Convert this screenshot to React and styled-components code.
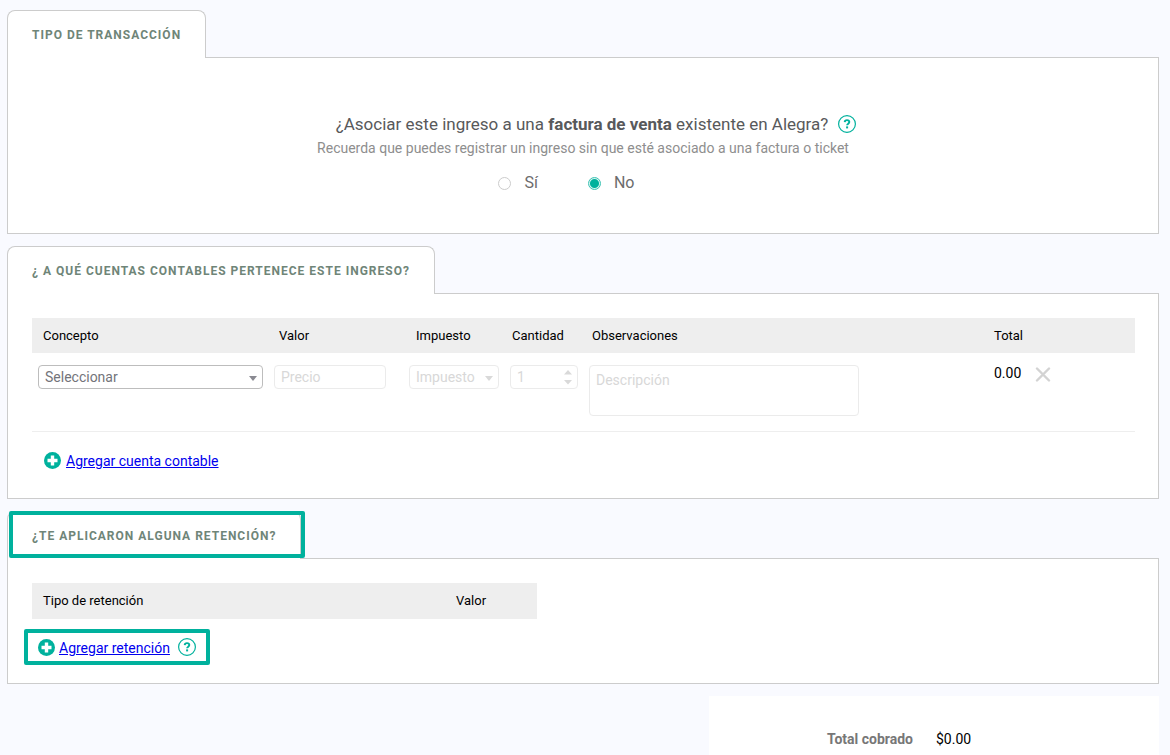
import React from 'react';
import styled, { createGlobalStyle } from 'styled-components';

const GlobalStyle = createGlobalStyle`
  *, *::before, *::after { box-sizing: border-box; }
  body {
    margin: 0;
    background: #f9faff;
    color: #000;
    font-family: Roboto, "Liberation Sans", sans-serif;
    font-size: 14px;
    line-height: 20px;
  }
  input, select, textarea, button { font: inherit; margin: 0; }
`;

const TEAL = '#00b19d';

const Page = styled.main`
  padding: 10px 11px 0 7px;
  height: 100vh;
  overflow: hidden;
`;

const Section = styled.section`
  margin-bottom: 12px;
`;

const Tab = styled.h2`
  position: relative;
  z-index: 1;
  width: fit-content;
  height: 48px;
  margin: 0 0 -1px;
  padding: 14px 24px 0;
  border: 1px solid #ccc;
  border-bottom: 0;
  border-radius: 8px 8px 0 0;
  background: #fff;
  color: #6f8578;
  font-size: 12px;
  font-weight: 700;
  line-height: 20px;
  letter-spacing: 1px;
`;

const TabHighlight = styled.span`
  position: absolute;
  inset: -1px -5px 1px 1px;
  border: 4px solid ${TEAL};
  border-radius: 2px;
`;

const Panel = styled.div`
  padding: ${(p) => p.$padding || '24px 23px 24px 24px'};
  border: 1px solid #ccc;
  background: #fff;
`;

const Question = styled.fieldset`
  margin: 0;
  padding: 0;
  border: 0;
  text-align: center;
`;

const Legend = styled.legend`
  display: flex;
  align-items: center;
  gap: 10px;
  margin: 0 auto;
  padding: 0 0 0 26px;
  color: #58595b;
  font-size: 17px;
  line-height: 24px;
`;

const Hint = styled.p`
  margin: 2px 0 15px;
  color: #8e8e8e;
  line-height: 20px;
`;

const Options = styled.div`
  display: flex;
  justify-content: center;
  gap: 50px;
  padding-right: 33px;
`;

const Option = styled.label`
  display: flex;
  align-items: center;
  gap: 13px;
  color: #6c6c6c;
  font-size: 16px;
  line-height: 20px;
`;

const Radio = styled.input`
  appearance: none;
  width: 13px;
  height: 13px;
  border: 1px solid #ccc;
  border-radius: 50%;
  background: #fff;
  &:checked {
    border-color: #3cc3b4;
    background: radial-gradient(circle, ${TEAL} 4px, #d4f3ef 5px);
  }
`;

const Table = styled.table`
  width: ${(p) => p.$width || '100%'};
  border-collapse: collapse;
  table-layout: fixed;
`;

const Col = styled.col`
  width: ${(p) => p.$width};
`;

const Th = styled.th`
  height: ${(p) => p.$height || '35px'};
  padding: 0 0 0 11px;
  background: #eee;
  font-size: 13px;
  font-weight: 400;
  text-align: left;
`;

const Td = styled.td`
  padding: 12px 0 15px ${(p) => p.$inset || '6px'};
  border-bottom: 1px solid #eee;
  vertical-align: top;
`;

const Control = styled.div`
  position: relative;
  width: ${(p) => p.$width};
  height: ${(p) => p.$height || '24px'};
  color: ${(p) => (p.$active ? '#73747a' : '#d8d8d8')};

  select, input, textarea {
    display: block;
    width: 100%;
    height: 100%;
    padding: 0 6px;
    appearance: none;
    border: 1px solid ${(p) => (p.$active ? '#bdbdbd' : '#ebebeb')};
    border-radius: 4px;
    outline: 0;
    background: #fff;
    color: inherit;
    opacity: 1;
    resize: none;
  }
  textarea { padding: 4px 6px; }
  ::placeholder { color: inherit; opacity: 1; }
  svg {
    position: absolute;
    right: 6px;
    top: 0;
    pointer-events: none;
  }
`;

const TotalCell = styled.div`
  display: flex;
  align-items: center;
  gap: 14px;
  line-height: 17px;
`;

const IconButton = styled.button`
  display: flex;
  padding: 0;
  border: 0;
  background: none;
  cursor: pointer;
`;

const AddRow = styled.div`
  display: flex;
  align-items: center;
  gap: 5px;
  margin: 16px 0 2px 12px;
  line-height: 22px;
`;

const HighlightedRow = styled(AddRow)`
  gap: 4px;
  width: fit-content;
  height: 36px;
  margin: 10px 0 0 -8px;
  padding: 0 10px;
  border: 4px solid ${TEAL};
  border-radius: 2px;
`;

const Link = styled.a`
  color: #00e;
  text-decoration: underline;
  padding-top: 2px;
`;

const HelpSlot = styled.span`
  display: flex;
  margin-left: 4px;
`;

const Totals = styled.dl`
  display: grid;
  grid-template-columns: 204px 1fr;
  column-gap: 23px;
  width: 450px;
  min-height: 120px;
  margin: 0 0 0 auto;
  padding-top: 33px;
  background: #fff;
`;

const TotalLabel = styled.dt`
  color: #777;
  font-weight: 700;
  text-align: right;
`;

const TotalValue = styled.dd`
  margin: 0;
`;

const HelpIcon = () => (
  <svg width="18" height="18" viewBox="0 0 18 18" fill="none" stroke={TEAL} aria-hidden="true">
    <circle cx="9" cy="9" r="8.4" strokeWidth="1.2" />
    <path d="M6.7 7.1C6.8 5.8 7.8 5.100 9 5.100s2.300.7 2.300 2c0 1.500-2.200 1.600-2.200 3.200" strokeWidth="1.900" />
    <path d="M9.100 11.400v2" strokeWidth="2" />
  </svg>
);

const PlusIcon = () => (
  <svg width="17" height="17" viewBox="0 0 17 17" aria-hidden="true">
    <circle cx="8.5" cy="8.5" r="8.5" fill={TEAL} />
    <path d="M8.5 3.500v10M3.500 8.500h10" stroke="#fff" strokeWidth="3.400" />
  </svg>
);

const CloseIcon = () => (
  <svg width="16" height="16" viewBox="0 0 16 16" fill="none" stroke="#d3d3d3" strokeWidth="2.4" strokeLinecap="round" aria-hidden="true">
    <path d="M2 2.500l12 12M14 2.500L2 14.500" />
  </svg>
);

const Caret = ({ fill = '#d9d9d9' }) => (
  <svg width="8" height="24" viewBox="0 0 8 24" fill={fill} aria-hidden="true">
    <path d="M0 11h8l-4 5z" />
  </svg>
);

const Spinner = () => (
  <svg width="8" height="24" viewBox="0 0 8 24" fill="#d9d9d9" aria-hidden="true">
    <path d="M0 9.500h8L4 5zM0 15h8L4 19.500z" />
  </svg>
);

export default function App() {
  return (
    <>
      <GlobalStyle />
      <Page>
        <Section>
          <Tab>TIPO DE TRANSACCIÓN</Tab>
          <Panel $padding="54px 0 40px">
            <Question>
              <Legend>
                <span>¿Asociar este ingreso a una <b>factura de venta</b> existente en Alegra?</span>
                <IconButton type="button" aria-label="Ayuda"><HelpIcon /></IconButton>
              </Legend>
              <Hint>Recuerda que puedes registrar un ingreso sin que esté asociado a una factura o ticket</Hint>
              <Options>
                <Option><Radio type="radio" name="asociar" />Sí</Option>
                <Option><Radio type="radio" name="asociar" defaultChecked />No</Option>
              </Options>
            </Question>
          </Panel>
        </Section>

        <Section>
          <Tab>¿ A QUÉ CUENTAS CONTABLES PERTENECE ESTE INGRESO?</Tab>
          <Panel>
            <Table>
              <colgroup>
                <Col $width="236px" />
                <Col $width="137px" />
                <Col $width="96px" />
                <Col $width="80px" />
                <Col />
                <Col $width="152px" />
              </colgroup>
              <thead>
                <tr>
                  <Th>Concepto</Th>
                  <Th>Valor</Th>
                  <Th>Impuesto</Th>
                  <Th>Cantidad</Th>
                  <Th>Observaciones</Th>
                  <Th>Total</Th>
                </tr>
              </thead>
              <tbody>
                <tr>
                  <Td>
                    <Control $width="225px" $active>
                      <select aria-label="Concepto"><option>Seleccionar</option></select>
                      <Caret fill="#8a8a92" />
                    </Control>
                  </Td>
                  <Td>
                    <Control $width="112px"><input aria-label="Valor" placeholder="Precio" disabled /></Control>
                  </Td>
                  <Td $inset="4px">
                    <Control $width="90px">
                      <select aria-label="Impuesto" disabled><option>Impuesto</option></select>
                      <Caret />
                    </Control>
                  </Td>
                  <Td $inset="9px">
                    <Control $width="68px">
                      <input aria-label="Cantidad" defaultValue="1" disabled />
                      <Spinner />
                    </Control>
                  </Td>
                  <Td $inset="8px">
                    <Control $width="270px" $height="51px">
                      <textarea aria-label="Observaciones" placeholder="Descripción" disabled />
                    </Control>
                  </Td>
                  <Td $inset="11px">
                    <TotalCell>
                      <span>0.00</span>
                      <IconButton type="button" aria-label="Eliminar"><CloseIcon /></IconButton>
                    </TotalCell>
                  </Td>
                </tr>
              </tbody>
            </Table>
            <AddRow>
              <PlusIcon />
              <Link href="#cuenta">Agregar cuenta contable</Link>
            </AddRow>
          </Panel>
        </Section>

        <Section>
          <Tab>¿TE APLICARON ALGUNA RETENCIÓN?<TabHighlight /></Tab>
          <Panel $padding="24px 23px 18px 24px">
            <Table $width="505px">
              <colgroup>
                <Col />
                <Col $width="92px" />
              </colgroup>
              <thead>
                <tr>
                  <Th $height="36px">Tipo de retención</Th>
                  <Th $height="36px">Valor</Th>
                </tr>
              </thead>
            </Table>
            <HighlightedRow>
              <PlusIcon />
              <Link href="#retencion">Agregar retención</Link>
              <HelpSlot><IconButton type="button" aria-label="Ayuda"><HelpIcon /></IconButton></HelpSlot>
            </HighlightedRow>
          </Panel>
        </Section>

        <Totals>
          <TotalLabel>Total cobrado</TotalLabel>
          <TotalValue>$0.00</TotalValue>
        </Totals>
      </Page>
    </>
  );
}
